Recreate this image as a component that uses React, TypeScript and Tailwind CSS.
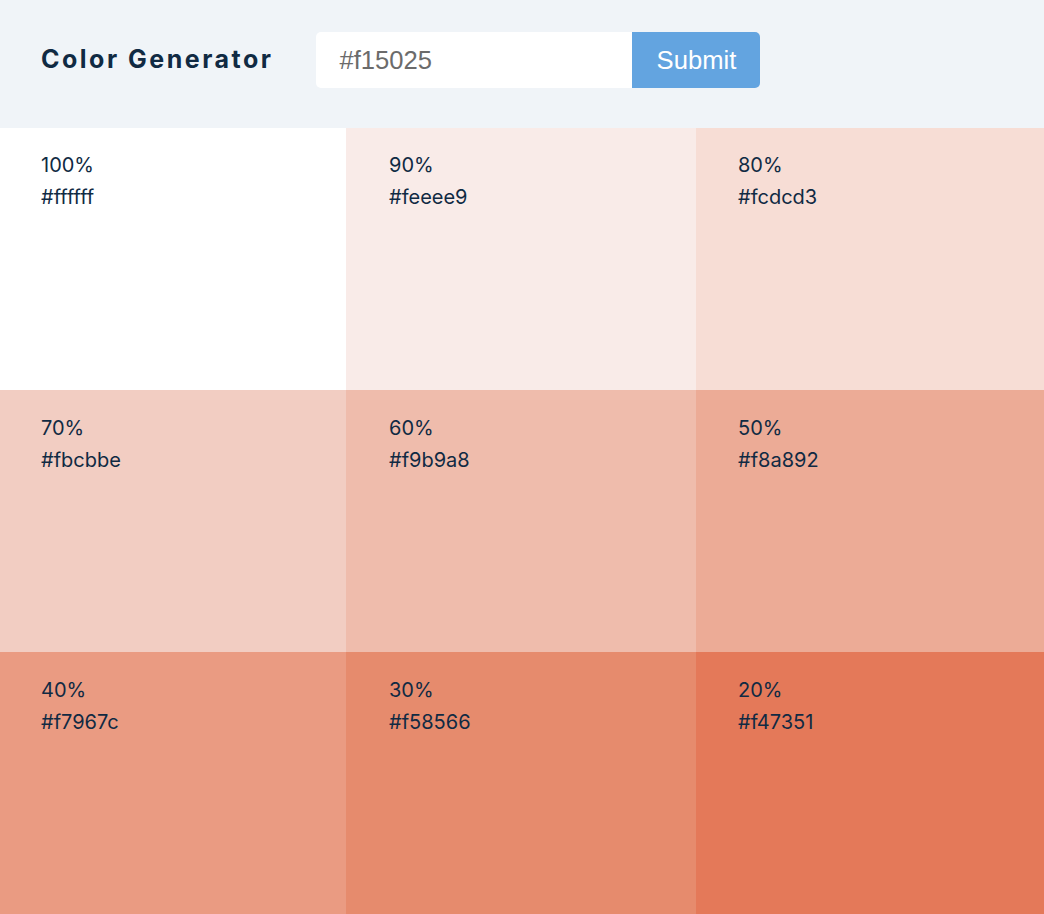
const swatches = [
  { weight: '100%', hex: '#ffffff', bg: 'bg-[#ffffff]', pad: 'pl-[41px]' },
  { weight: '90%', hex: '#feeee9', bg: 'bg-[#f9ebe8]', pad: 'pl-[43px]' },
  { weight: '80%', hex: '#fcdcd3', bg: 'bg-[#f7ddd5]', pad: 'pl-[42px]' },
  { weight: '70%', hex: '#fbcbbe', bg: 'bg-[#f2cdc2]', pad: 'pl-[41px]' },
  { weight: '60%', hex: '#f9b9a8', bg: 'bg-[#efbcac]', pad: 'pl-[43px]' },
  { weight: '50%', hex: '#f8a892', bg: 'bg-[#ecab96]', pad: 'pl-[42px]' },
  { weight: '40%', hex: '#f7967c', bg: 'bg-[#ea9b82]', pad: 'pl-[41px]' },
  { weight: '30%', hex: '#f58566', bg: 'bg-[#e68b6d]', pad: 'pl-[43px]' },
  { weight: '20%', hex: '#f47351', bg: 'bg-[#e47959]', pad: 'pl-[42px]' },
];

export default function App() {
  return (
    <div className="min-h-screen bg-white font-['Inter',sans-serif]">
      <section className="h-[128px] bg-[#f0f4f8] flex items-center pl-[41px] pb-[8px]">
        <h3 className="text-[25px] font-bold tracking-[2.5px] text-[#102a43] mr-[43px]">
          Color Generator
        </h3>
        <form className="flex" onSubmit={(e) => e.preventDefault()}>
          <input
            type="text"
            defaultValue="#f15025"
            className="w-[316px] h-[56px] bg-white rounded-l-[5px] pl-[23px] text-[25.6px] text-[#6b6b6b] font-['Liberation_Sans',Arial,sans-serif] outline-none"
          />
          <button
            type="submit"
            className="w-[128px] h-[56px] bg-[#63a4e0] rounded-r-[5px] text-white text-[25.6px] font-['Liberation_Sans',Arial,sans-serif]"
          >
            Submit
          </button>
        </form>
      </section>
      <section className="grid grid-cols-[346px_350px_348px] auto-rows-[262px]">
        {swatches.map((s, i) => (
          <article
            key={s.weight}
            className={`${s.bg} ${s.pad} ${i < 3 ? 'pt-[21px]' : 'pt-[22px]'} text-[20px] leading-[32px] text-[#102a43]`}
          >
            <p>{s.weight}</p>
            <p>{s.hex}</p>
          </article>
        ))}
      </section>
    </div>
  );
}
